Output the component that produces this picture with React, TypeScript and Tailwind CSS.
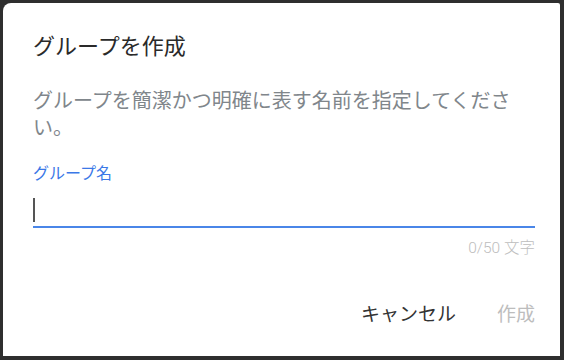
import React from 'react';

const App: React.FC = () => {
  return (
    <div className="w-[564px] h-[360px] bg-[#2e2e2e] pt-[3px] pl-[3px] pr-[4px] pb-[4px] font-['Roboto','Noto_Sans_CJK_JP',sans-serif]">
      <div className="h-full w-full bg-white rounded-tl-[8px] rounded-tr-[2px] flex flex-col pl-[30px] pr-[25px] pt-[30px]">
        <h1 className="text-[22px] leading-[28px] text-[#2a2a2a] font-normal">グループを作成</h1>

        <p className="mt-[27px] text-[20px] leading-[27px] text-[#80868b] w-[500px]">
          グループを簡潔かつ明確に表す名前を指定してください。
        </p>

        <label className="mt-[22px] text-[16px] leading-[20px] text-[#3b78e7]">グループ名</label>

        <div className="mt-[12px] h-[32px] border-b-2 border-[#4a86e8] flex items-end pb-[4px]">
          <span className="w-[2px] h-[24px] bg-[#555]"></span>
        </div>

        <div className="mt-[11px] text-right text-[15.5px] leading-[19px] text-[#bdbdbd] font-light">0/50 文字</div>

        <div className="mt-[45px] flex justify-end items-center gap-[41px]">
          <button className="text-[19px] leading-[24px] text-[#333]">キャンセル</button>
          <button className="text-[19px] leading-[24px] text-[#bdbdbd]">作成</button>
        </div>
      </div>
    </div>
  );
};

export default App;
